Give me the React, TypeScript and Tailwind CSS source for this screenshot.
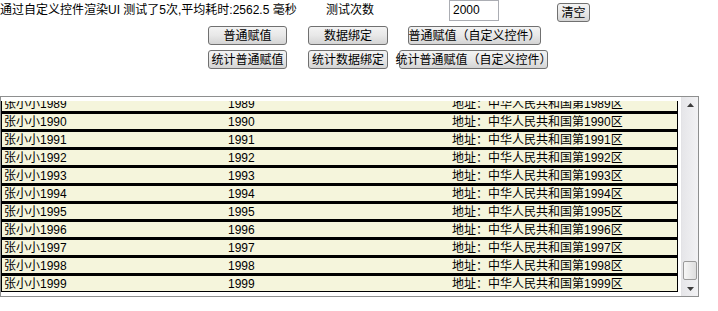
import React from 'react';

const font = { fontFamily: '"Liberation Sans", "Noto Sans CJK SC", sans-serif' };

const rows = Array.from({ length: 11 }, (_, i) => 1989 + i);

function Btn({ label, className }: { label: string; className: string }) {
  return (
    <button
      className={`flex items-center justify-center whitespace-nowrap rounded-[3px] border border-[#707070] bg-gradient-to-b from-[#f3f3f3] via-[#e8e8e8] to-[#d4d4d4] text-[12px] leading-none text-black ${className}`}
    >
      {label}
    </button>
  );
}

export default function App() {
  return (
    <div className="w-[718px] h-[311px] bg-white text-black text-[12px] overflow-hidden" style={font}>
      {/* 顶部 */}
      <div className="flex items-start h-[22px]">
        <div className="w-[326px] pt-[3px] leading-[15px] whitespace-nowrap">
          通过自定义控件渲染UI 测试了5次,平均耗时:2562.5 毫秒
        </div>
        <div className="w-[123px] pt-[3px] leading-[15px]">测试次数</div>
        <div className="w-[50px] h-[21px] border border-[#abadb3] pl-[3px] pt-[1px] leading-[16px]">2000</div>
        <Btn label="清空" className="ml-[58px] mt-[3px] w-[33px] h-[19px]" />
      </div>
      <div className="flex pl-[208px] mt-[4px] h-[19px]">
        <Btn label="普通赋值" className="w-[79px] h-[19px]" />
        <Btn label="数据绑定" className="ml-[21px] w-[80px] h-[19px]" />
        <Btn label="普通赋值（自定义控件）" className="ml-[20px] w-[133px] h-[19px]" />
      </div>
      <div className="flex pl-[208px] mt-[5px] h-[19px]">
        <Btn label="统计普通赋值" className="w-[79px] h-[19px]" />
        <Btn label="统计数据绑定" className="ml-[21px] w-[80px] h-[19px]" />
        <Btn label="统计普通赋值（自定义控件）" className="ml-[11px] w-[149px] h-[19px]" />
      </div>

      {/* 列表 */}
      <div className="mt-[27px] w-[699px] h-[201px] border border-[#8e8f8f] flex">
        <div className="flex-1 py-[4px] pr-[3px]">
          <div className="h-[191px] overflow-hidden">
            {rows.map((n, i) => (
              <div
                key={n}
                className={`h-[18px] border-x border-t-2 border-b border-black bg-[#f5f5dc] flex items-center leading-none ${i === 0 ? 'mt-[-7px]' : ''}`}
              >
                <span className="w-[226px] pl-[2px]">张小小{n}</span>
                <span className="w-[224px]">{n}</span>
                <span>地址：中华人民共和国第{n}区</span>
              </div>
            ))}
          </div>
        </div>
        <div className="w-[17px] shrink-0 bg-gradient-to-r from-[#e6e6e9] to-[#f2f2f4] border-l border-[#e3e3e6] flex flex-col items-center">
          <svg width="7" height="4" viewBox="0 0 7 4" className="mt-[6px]">
            <path d="M3.5 0 L7 4 L0 4 Z" fill="#3c3c3c" />
          </svg>
          <div className="flex-1" />
          <div className="w-[14px] h-[19px] rounded-[2px] border border-[#9a9a9a] bg-gradient-to-r from-[#f6f6f6] to-[#dedede]" />
          <svg width="7" height="4" viewBox="0 0 7 4" className="mt-[7px] mb-[5px]">
            <path d="M0 0 L7 0 L3.5 4 Z" fill="#3c3c3c" />
          </svg>
        </div>
      </div>
    </div>
  );
}
